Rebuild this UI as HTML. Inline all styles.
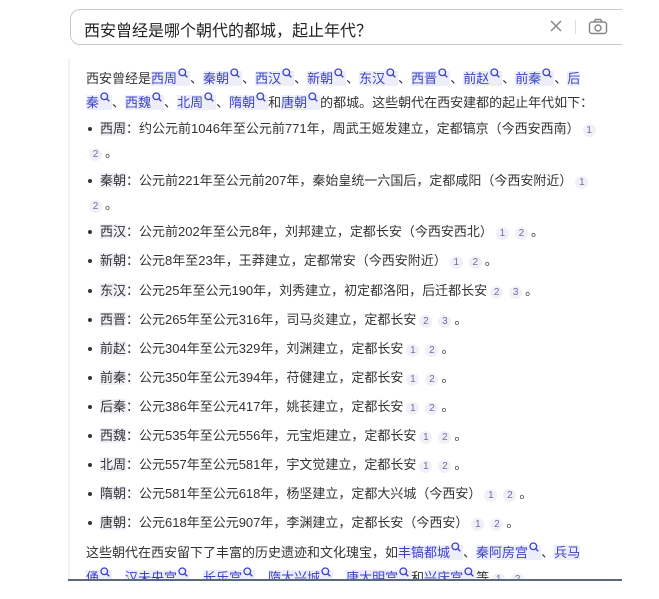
<!DOCTYPE html><html><head><meta charset="utf-8"><style>
body{margin:0;width:659px;height:599px;background:#fff;position:relative;overflow:hidden;font-family:"Liberation Sans","Noto Sans CJK SC",sans-serif;color:#333;font-size:13px}
.clip{position:absolute;left:70px;top:9px;width:552px;height:36px;overflow:hidden}
.box{position:absolute;left:0;top:0;width:600px;height:36px;border:1.5px solid #c8c8cc;border-radius:10px;box-sizing:border-box}
.q{position:absolute;left:84px;top:17px;font-size:16px;color:#222}
.side{position:absolute;left:68px;top:58px;width:2px;height:522px;background:#f3f3f5}
.l{position:absolute;left:86px;white-space:nowrap;line-height:18px}
.b{left:100px}
.b:before{content:"";position:absolute;left:-12px;top:7px;width:4px;height:4px;border-radius:50%;background:#333}
a{color:#3a42c8;text-decoration:none;background:#eeeefb}
.s{display:inline-block;width:10px;height:10px;margin:0 2px 0 1px;vertical-align:5px}
.n{display:inline-block;width:13px;height:13px;border-radius:7px;background:#f0f0f6;color:#6b6fa8;font-size:10px;text-align:center;line-height:13px;margin:0 3px}
.t{background:#f1f0f9}
.bot{position:absolute;left:68px;top:579px;width:554px;height:2px;background:#5a6a7a}
</style></head><body>
<svg width="0" height="0" style="position:absolute"><defs><symbol id="m" viewBox="0 0 10 10"><circle cx="4.3" cy="4.3" r="3.3" fill="none" stroke="#3a42c8" stroke-width="1.3"/><path d="M6.6 6.6L9.3 9.3" stroke="#3a42c8" stroke-width="1.4"/></symbol></defs></svg>
<div class="clip"><div class="box"></div></div>
<div class="q">西安曾经是哪个朝代的都城，起止年代？</div>
<svg style="position:absolute;left:549px;top:19px" width="14" height="14"><path d="M2 2L12 12M12 2L2 12" stroke="#888" stroke-width="1.5"/></svg>
<div style="position:absolute;left:575px;top:20px;width:1px;height:14px;background:#ddd"></div>
<svg style="position:absolute;left:588px;top:18px" width="20" height="17"><rect x="1.5" y="4" width="17" height="11.5" rx="2.5" fill="none" stroke="#888" stroke-width="1.5"/><path d="M6 4L7.5 1.5H12.5L14 4" fill="none" stroke="#888" stroke-width="1.5"/><circle cx="10" cy="10" r="3" fill="none" stroke="#888" stroke-width="1.5"/></svg>
<div class="side"></div>
<div class="l" style="top:68px">西安曾经是<a>西周<svg class="s"><use href="#m"/></svg></a>、<a>秦朝<svg class="s"><use href="#m"/></svg></a>、<a>西汉<svg class="s"><use href="#m"/></svg></a>、<a>新朝<svg class="s"><use href="#m"/></svg></a>、<a>东汉<svg class="s"><use href="#m"/></svg></a>、<a>西晋<svg class="s"><use href="#m"/></svg></a>、<a>前赵<svg class="s"><use href="#m"/></svg></a>、<a>前秦<svg class="s"><use href="#m"/></svg></a>、<a>后</a></div>
<div class="l" style="top:92px"><a>秦<svg class="s"><use href="#m"/></svg></a>、<a>西魏<svg class="s"><use href="#m"/></svg></a>、<a>北周<svg class="s"><use href="#m"/></svg></a>、<a>隋朝<svg class="s"><use href="#m"/></svg></a>和<a>唐朝<svg class="s"><use href="#m"/></svg></a>的都城。这些朝代在西安建都的起止年代如下：</div>
<div class="l b" style="top:120px"><span class="t">西周</span>：约公元前1046年至公元前771年，周武王姬发建立，定都镐京（今西安西南）<span class="n">1</span></div>
<div class="l" style="top:144px"><span class="n">2</span>。</div>
<div class="l b" style="top:172px"><span class="t">秦朝</span>：公元前221年至公元前207年，秦始皇统一六国后，定都咸阳（今西安附近）<span class="n">1</span></div>
<div class="l" style="top:196px"><span class="n">2</span>。</div>
<div class="l b" style="top:223px"><span class="t">西汉</span>：公元前202年至公元8年，刘邦建立，定都长安（今西安西北）<span class="n">1</span><span class="n">2</span>。</div>
<div class="l b" style="top:252px"><span class="t">新朝</span>：公元8年至23年，王莽建立，定都常安（今西安附近）<span class="n">1</span><span class="n">2</span>。</div>
<div class="l b" style="top:282px"><span class="t">东汉</span>：公元25年至公元190年，刘秀建立，初定都洛阳，后迁都长安<span class="n">2</span><span class="n">3</span>。</div>
<div class="l b" style="top:311px"><span class="t">西晋</span>：公元265年至公元316年，司马炎建立，定都长安<span class="n">2</span><span class="n">3</span>。</div>
<div class="l b" style="top:340px"><span class="t">前赵</span>：公元304年至公元329年，刘渊建立，定都长安<span class="n">1</span><span class="n">2</span>。</div>
<div class="l b" style="top:369px"><span class="t">前秦</span>：公元350年至公元394年，苻健建立，定都长安<span class="n">1</span><span class="n">2</span>。</div>
<div class="l b" style="top:398px"><span class="t">后秦</span>：公元386年至公元417年，姚苌建立，定都长安<span class="n">1</span><span class="n">2</span>。</div>
<div class="l b" style="top:427px"><span class="t">西魏</span>：公元535年至公元556年，元宝炬建立，定都长安<span class="n">1</span><span class="n">2</span>。</div>
<div class="l b" style="top:456px"><span class="t">北周</span>：公元557年至公元581年，宇文觉建立，定都长安<span class="n">1</span><span class="n">2</span>。</div>
<div class="l b" style="top:485px"><span class="t">隋朝</span>：公元581年至公元618年，杨坚建立，定都大兴城（今西安）<span class="n">1</span><span class="n">2</span>。</div>
<div class="l b" style="top:514px"><span class="t">唐朝</span>：公元618年至公元907年，李渊建立，定都长安（今西安）<span class="n">1</span><span class="n">2</span>。</div>
<div class="l" style="top:542px">这些朝代在西安留下了丰富的历史遗迹和文化瑰宝，如<a>丰镐都城<svg class="s"><use href="#m"/></svg></a>、<a>秦阿房宫<svg class="s"><use href="#m"/></svg></a>、<a>兵马</a></div>
<div class="l" style="top:567px"><a>俑<svg class="s"><use href="#m"/></svg></a>、<a>汉未央宫<svg class="s"><use href="#m"/></svg></a>、<a>长乐宫<svg class="s"><use href="#m"/></svg></a>、<a>隋大兴城<svg class="s"><use href="#m"/></svg></a>、<a>唐大明宫<svg class="s"><use href="#m"/></svg></a>和<a>兴庆宫<svg class="s"><use href="#m"/></svg></a>等<span class="n">1</span><span class="n">2</span>。</div>
<div style="position:absolute;left:0;top:581px;width:659px;height:18px;background:#fff"></div>
<div class="bot"></div>
</body></html>
